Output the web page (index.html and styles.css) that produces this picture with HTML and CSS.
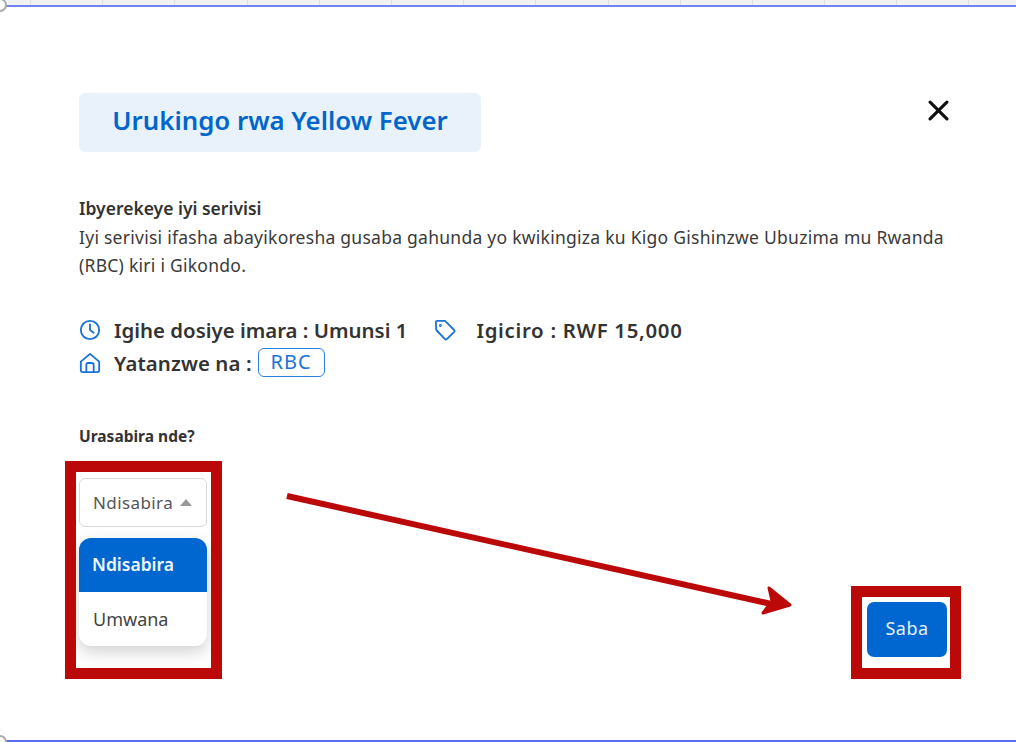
FILE: index.html
```html
<!DOCTYPE html>
<html lang="en">
<head>
  <meta charset="UTF-8" />
  <meta name="viewport" content="width=device-width, initial-scale=1" />
  <title>Urukingo rwa Yellow Fever</title>
  <link rel="stylesheet" href="styles.css">
</head>
<body>
  <!-- Table behind the modal, only the last row peeks out -->
  <div class="table-strip">
    <span></span><span></span><span></span><span></span><span></span><span></span><span></span>
    <span></span><span></span><span></span><span></span><span></span><span></span><span></span>
  </div>

  <main class="modal">
    <span class="corner corner-top"></span>
    <span class="corner corner-bottom"></span>

    <div class="modal-head">
      <h1 class="modal-title">Urukingo rwa Yellow Fever</h1>
      <svg class="close-icon" viewBox="0 0 20 20" aria-label="Close">
        <path d="M2 2 L18 18 M18 2 L2 18" />
      </svg>
    </div>

    <section class="about">
      <h2 class="about-title">Ibyerekeye iyi serivisi</h2>
      <p class="about-text">Iyi serivisi ifasha abayikoresha gusaba gahunda yo kwikingiza ku Kigo Gishinzwe Ubuzima mu Rwanda (RBC) kiri i Gikondo.</p>
    </section>

    <section class="meta">
      <div class="meta-row">
        <svg class="meta-icon" viewBox="0 0 24 24">
          <circle cx="12" cy="12" r="10" />
          <path d="M12 6 V12 L16 15" />
        </svg>
        <span class="meta-time">Igihe dosiye imara : Umunsi 1</span>
        <svg class="meta-icon meta-icon-tag" viewBox="0 0 24 24">
          <path d="M2 3.5 A1.5 1.5 0 0 1 3.5 2 H12 L22 12 A1.5 1.5 0 0 1 22 14 L14 22 A1.5 1.5 0 0 1 12 22 L2.5 12 Z" />
          <circle cx="7" cy="7" r="0.6" />
        </svg>
        <span class="meta-price">Igiciro : RWF 15,000</span>
      </div>
      <div class="meta-row">
        <svg class="meta-icon" viewBox="0 0 24 24">
          <path d="M2 10.5 L12 2 L22 10.5 V20 A2 2 0 0 1 20 22 H4 A2 2 0 0 1 2 20 Z" />
          <path d="M8 22 V14 A2 2 0 0 1 10 12 H14 A2 2 0 0 1 16 14 V22" />
        </svg>
        <span class="meta-by">Yatanzwe na :</span>
        <span class="badge">RBC</span>
      </div>
    </section>

    <label class="field-label">Urasabira nde?</label>

    <div class="modal-foot">
      <div class="select">
        <span>Ndisabira</span>
        <span class="caret"></span>
      </div>
      <button class="btn-send">Saba</button>
    </div>

    <!-- Open dropdown -->
    <ul class="menu">
      <li class="menu-item active">Ndisabira</li>
      <li class="menu-item">Umwana</li>
    </ul>

    <!-- Red annotations on top of the screenshot -->
    <div class="mark mark-select"></div>
    <div class="mark mark-send"></div>
    <svg class="arrow" viewBox="0 0 520 130">
      <path d="M1 3 L490 112" />
      <path class="arrow-head" d="M483 95 L504 112 L477 120 L486 108 Z" />
    </svg>
  </main>
</body>
</html>
```

FILE: styles.css
```css
* {
  box-sizing: border-box;
}

body {
  font-family: "Noto Sans", "Open Sans", sans-serif;
  margin: 0;
  width: 1016px;
  height: 742px;
  overflow: hidden;
  background: #fff;
  color: #333;
}

.table-strip {
  display: flex;
  height: 5px;
  padding-left: 30px;
  background: #f2f2f2;
}
.table-strip span {
  width: 72.2px;
  flex-shrink: 0;
  border-left: 1px solid #dedede;
}

.modal {
  position: relative;
  height: 737px;
  padding: 86px 67px 0 79px;
  border-top: 2px solid #6f83f7;
  border-bottom: 2px solid #5a6ff0;
}

.corner {
  position: absolute;
  left: -7px;
  width: 14px;
  height: 14px;
  border: 2px solid #aaa;
  border-radius: 50%;
  background: #fff;
}
.corner-top {
  top: -9px;
}
.corner-bottom {
  bottom: -9px;
}

/* Header */
.modal-head {
  display: flex;
  justify-content: space-between;
  align-items: flex-start;
}
.modal-title {
  width: 402px;
  height: 59px;
  margin: 0;
  background: #e9f2fa;
  border-radius: 6px;
  color: #0066cc;
  font-size: 25.8px;
  font-weight: 600;
  line-height: 55px;
  text-align: center;
}
.close-icon {
  width: 21px;
  height: 21px;
  margin: 7px 0 0;
}
.close-icon path {
  fill: none;
  stroke: #111;
  stroke-width: 3;
  stroke-linecap: round;
}

/* About */
.about {
  margin-top: 43px;
}
.about-title {
  margin: 0;
  font-size: 17.5px;
  font-weight: 600;
  line-height: 26px;
  color: #333;
}
.about-text {
  margin: 2px 0 0;
  font-size: 17.5px;
  letter-spacing: 0.26px;
  line-height: 28px;
  color: #3a3a3a;
}

/* Meta rows */
.meta {
  margin-top: 34px;
}
.meta-row {
  display: flex;
  align-items: center;
  height: 33px;
  font-size: 20.4px;
  font-weight: 600;
  color: #333;
}
.meta-price {
  letter-spacing: 0.7px;
}
.meta-by {
  letter-spacing: 0.1px;
}
.meta-icon {
  width: 22px;
  height: 22px;
  margin-right: 13px;
  flex-shrink: 0;
}
.meta-icon path,
.meta-icon circle {
  fill: none;
  stroke: #1a73d9;
  stroke-width: 2;
  stroke-linecap: round;
  stroke-linejoin: round;
}
.meta-icon-tag {
  margin-left: 27px;
  margin-right: 20px;
}
.badge {
  margin-left: 6px;
  width: 67px;
  height: 29px;
  line-height: 26px;
  border: 1px solid #2b7fe0;
  border-radius: 6px;
  color: #1a73d9;
  font-size: 20px;
  font-weight: 400;
  letter-spacing: 1px;
  text-align: center;
}

.field-label {
  display: block;
  margin-top: 44px;
  font-size: 15.5px;
  font-weight: 700;
  line-height: 26px;
  color: #333;
}

/* Select and send button */
.modal-foot {
  display: flex;
  justify-content: space-between;
  align-items: flex-start;
  margin-top: 29px;
  margin-right: 2px;
}
.select {
  display: flex;
  align-items: center;
  gap: 7px;
  width: 128px;
  height: 49px;
  padding-left: 13px;
  border: 1px solid #d9d9d9;
  border-radius: 6px;
  font-size: 17px;
  letter-spacing: 0.4px;
  color: #555;
}
.caret {
  width: 0;
  height: 0;
  border-left: 6.5px solid transparent;
  border-right: 6.5px solid transparent;
  border-bottom: 7px solid #999;
}
.btn-send {
  width: 80px;
  height: 55px;
  margin-top: 124px;
  padding: 0 0 3px;
  background: #0066d0;
  border: 0;
  border-radius: 7px;
  color: #e8f1fc;
  font-family: inherit;
  font-size: 18px;
  letter-spacing: 0.5px;
}

.menu {
  position: absolute;
  top: 531px;
  left: 79px;
  width: 128px;
  margin: 0;
  padding: 0;
  list-style: none;
  background: #fff;
  border-radius: 12px;
  overflow: hidden;
  box-shadow: 0 6px 16px rgba(0,0,0,0.18);
}
.menu-item {
  height: 54px;
  padding-left: 14px;
  font-size: 18px;
  line-height: 55px;
  color: #444;
}
.menu-item.active {
  padding-left: 13px;
  background: #0066d0;
  color: #f2f7fd;
  font-size: 17.5px;
  font-weight: 600;
  line-height: 53px;
}

.mark {
  position: absolute;
  border: 11px solid #bb0808;
}
.mark-select {
  top: 454px;
  left: 65px;
  width: 157px;
  height: 218px;
}
.mark-send {
  top: 579px;
  left: 851px;
  width: 110px;
  height: 93px;
}

.arrow {
  position: absolute;
  top: 486px;
  left: 286px;
  width: 520px;
  height: 130px;
}
.arrow path {
  fill: none;
  stroke: #bb0808;
  stroke-width: 6;
}
.arrow .arrow-head {
  fill: #bb0808;
  stroke-width: 3;
  stroke-linejoin: round;
}
```
